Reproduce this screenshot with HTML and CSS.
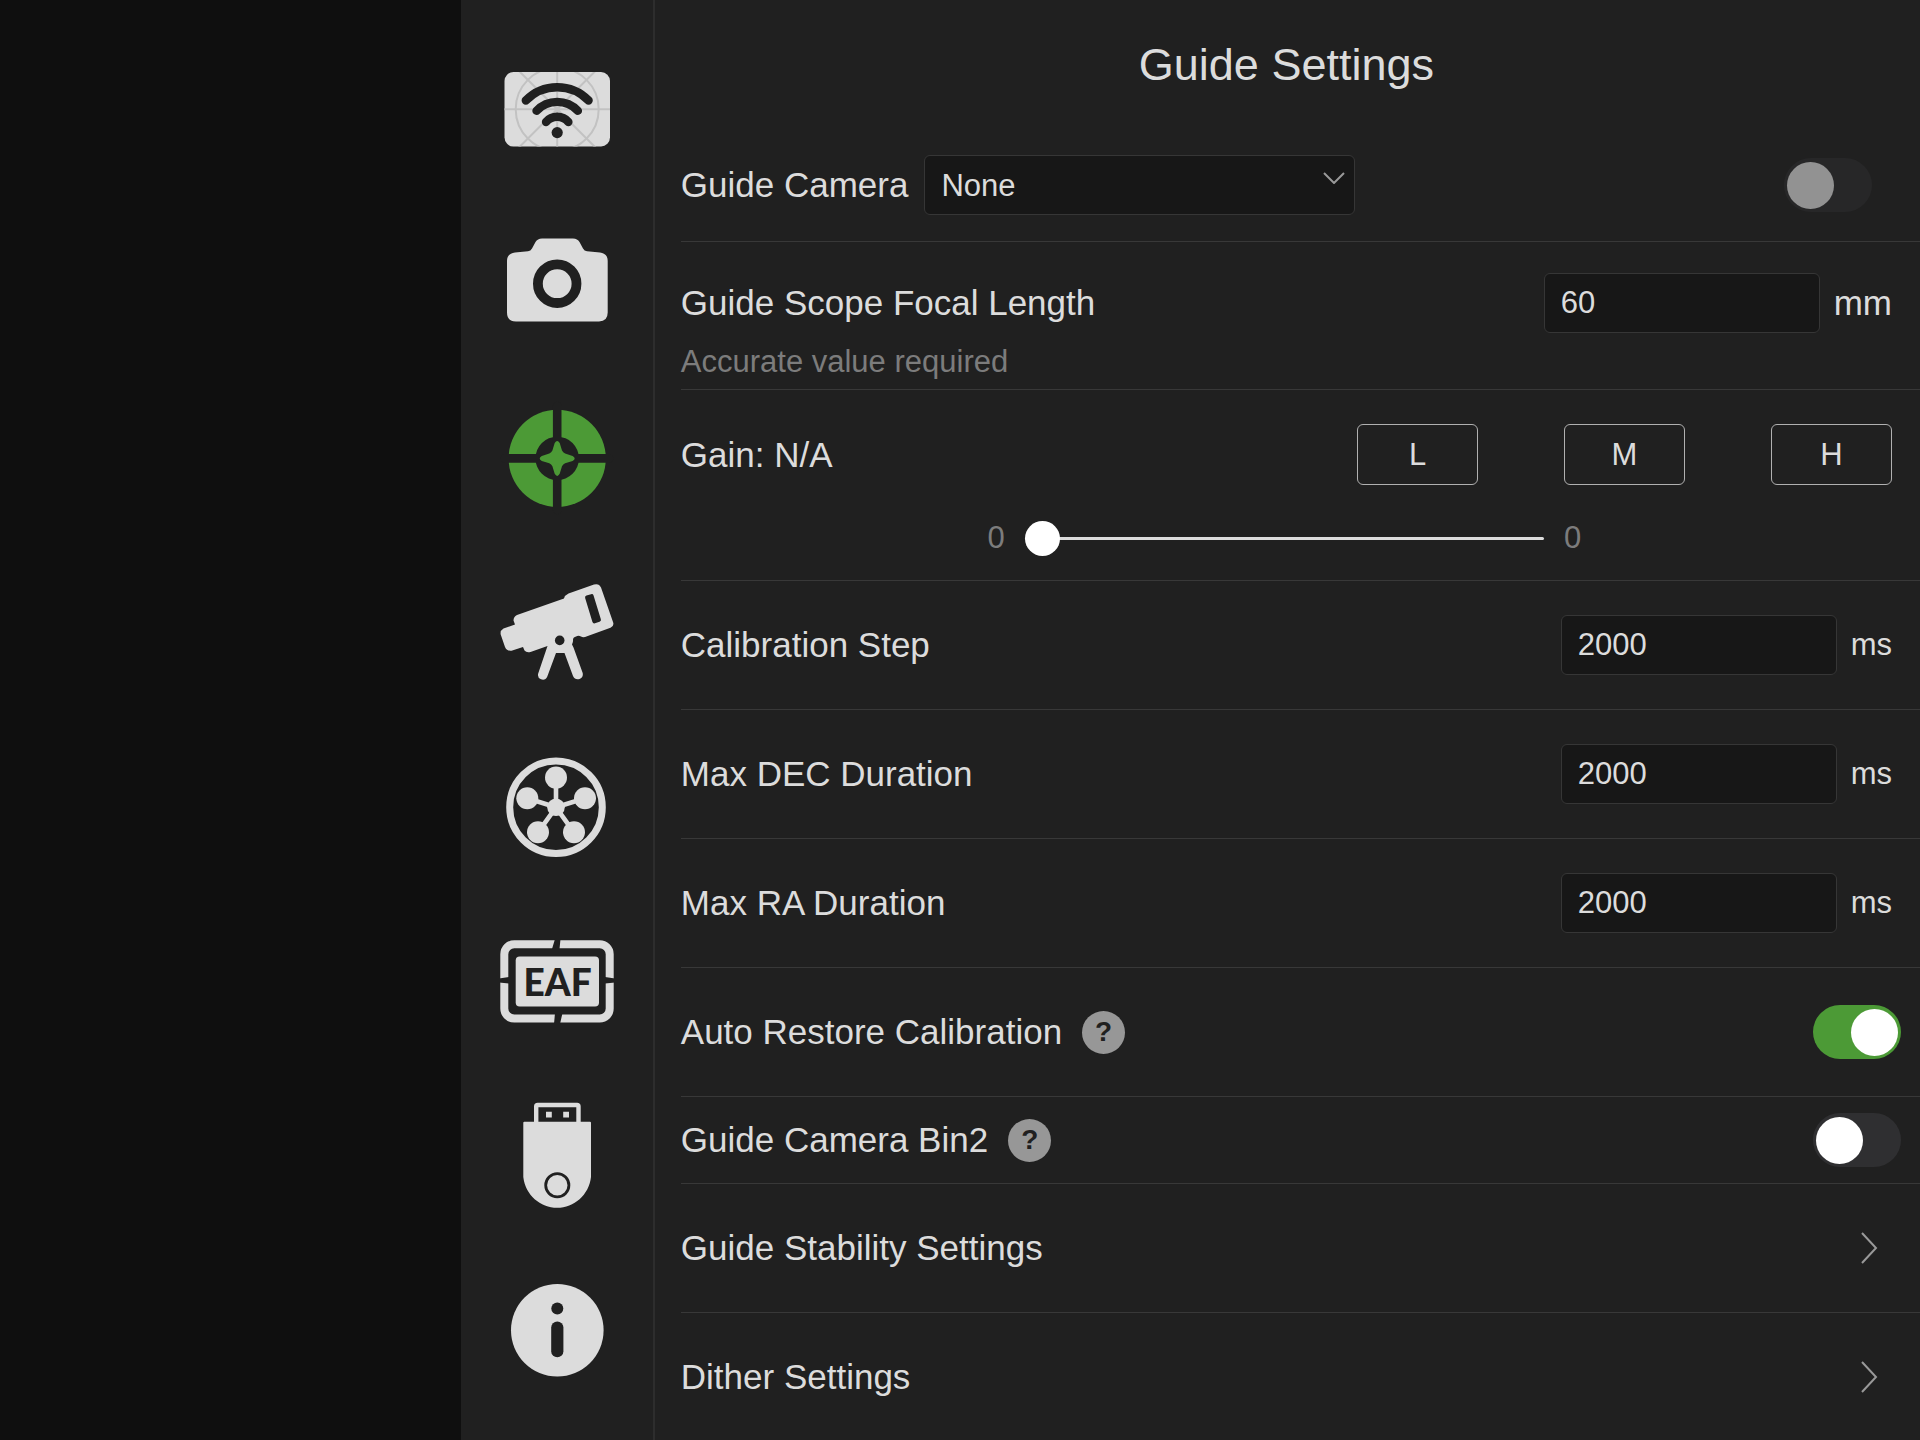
FILE: index.html
```html
<!DOCTYPE html>
<html lang="en">
<head>
<meta charset="utf-8">
<meta name="viewport" content="width=device-width, initial-scale=1.0">
<title>Guide Settings</title>
<link rel="stylesheet" href="styles.css">
</head>
<body>

<div class="backdrop"></div>

<nav class="sidebar">
  <button class="tab" aria-label="Wi-Fi">
    <svg class="icon" viewBox="0 0 120 120">
      <clipPath id="card"><rect x="7.5" y="23" width="105.5" height="74.5" rx="9"/></clipPath>
      <g clip-path="url(#card)">
        <rect class="fill" x="7" y="22" width="107" height="77"/>
        <g class="grid">
          <circle cx="60.2" cy="60.2" r="41.5"/>
          <path d="M7 60.2h107M60.2 22v77M20 20l80.4 80.4M100.4 20L20 100.4"/>
        </g>
      </g>
      <g class="cut-line" stroke-width="8.4">
        <path d="M28.8 51.5A43.7 43.7 0 0 1 91.6 51.5"/>
        <path d="M39.5 61.8A28.5 28.5 0 0 1 80.9 61.8"/>
        <path d="M49 73A14.7 14.7 0 0 1 71.4 73"/>
      </g>
      <circle class="cut" cx="60.2" cy="83.6" r="5.6"/>
    </svg>
  </button>
  <button class="tab" aria-label="Camera">
    <svg class="icon" viewBox="0 0 120 120">
      <path class="fill" d="M18 28.5L31 27.2Q33.7 27 35 24.5L38.5 18Q40.5 14.4 45 14.4H76Q80.5 14.4 82.500 18L86 24.5Q87.3 27 90 27.2L103 28.5Q110.7 29.5 110.7 37V88.5Q110.7 97.4 102 97.4H19Q10 97.4 10 88.5V37Q10 29.5 18 28.5Z"/>
      <circle class="cut-line" cx="60.2" cy="59.7" r="19.3" stroke-width="9.8"/>
    </svg>
  </button>
  <button class="tab active" aria-label="Guide">
    <svg class="icon" viewBox="0 0 120 120">
      <circle class="fill" cx="60.2" cy="60.4" r="48.6"/>
      <circle class="cut" cx="60.2" cy="60.4" r="21.7"/>
      <path class="cut-line" d="M8 60.4H112M60.2 8V112" stroke-width="8.6"/>
      <path class="fill" d="M57.7 45Q60.2 40.8 62.7 45L65 52.5Q66 54.6 68.1 55.6L75.6 57.9Q79.8 60.4 75.6 62.9L68.1 65.2Q66 66.2 65 68.3L62.7 75.8Q60.2 80 57.7 75.8L55.4 68.3Q54.4 66.2 52.3 65.2L44.8 62.9Q40.6 60.4 44.8 57.9L52.3 55.6Q54.4 54.6 55.4 52.5Z"/>
    </svg>
  </button>
  <button class="tab" aria-label="Telescope">
    <svg class="icon" viewBox="0 0 120 120">
      <path class="fill" d="M20 43L67 26.5Q68 23 71.5 21.5L97 12.5Q102 11 104 15.5L116 50Q117.5 54 113.5 55.8L88 65Q85.5 65.5 84 64.5Q81.5 62.8 79 64.5Q76.3 65 76 67Q76.4 70 75 72.5L76.5 75.5L85.7 101Q86.500 105.500 82.500 107Q78 108.200 76 104L67.500 81H59L50.300 104.500Q48.300 108.800 44 107.300Q40 105.500 41.200 101.500L50.500 74L33.500 80Q29.500 81 27.500 78.500L26 75L14.500 78.700Q10 79.500 8 75L3.700 62.500Q3 58.500 6.500 56.500L18 52.500L16.500 48.500Q16.500 44.500 20 43Z"/>
      <circle class="cut" cx="62.7" cy="68.4" r="4.8"/>
      <rect class="cut" x="91.6" y="22.2" width="8.8" height="29" rx="2" transform="rotate(-17 96 36.7)"/>
    </svg>
  </button>
  <button class="tab" aria-label="Filter wheel">
    <svg class="icon" viewBox="0 0 120 120">
      <g class="line">
        <circle cx="59" cy="60.3" r="46.3" stroke-width="7"/>
        <path d="M59 60.3V30.6M59 60.3L30.3 51.3M59 60.3L88 51.3M59 60.3L41 85.3M59 60.3L77 85.3" stroke-width="4.6"/>
      </g>
      <g class="fill">
        <circle cx="59" cy="60.3" r="8.8"/>
        <circle cx="59" cy="30.6" r="11"/>
        <circle cx="30.3" cy="51.3" r="11"/>
        <circle cx="88" cy="51.3" r="11"/>
        <circle cx="41" cy="85.3" r="11"/>
        <circle cx="77" cy="85.3" r="11"/>
      </g>
    </svg>
  </button>
  <button class="tab" aria-label="EAF focuser">
    <svg class="icon" viewBox="0 0 120 120">
      <rect class="line" x="7.3" y="23.2" width="105.4" height="74.4" rx="10" stroke-width="8"/>
      <path class="cut" d="M58 18H63.500L62.500 28H55ZM58 92H65.500L63 103H57ZM2 57.500L12 56V62.500L2 61.500ZM108 56L118 57.500V61.500L108 62.500Z"/>
      <rect class="fill" x="18.7" y="35.6" width="83.3" height="50" rx="4"/>
      <text class="eaf" x="60.5" y="74.5">EAF</text>
    </svg>
  </button>
  <button class="tab" aria-label="Storage">
    <svg class="icon" viewBox="0 0 120 120">
      <path class="line" d="M39.2 30V11.5Q39.2 10 40.7 10H80Q81.5 10 81.5 11.5V30" stroke-width="4.4"/>
      <path class="fill" d="M49 16.7h5.8v5.8H49ZM66.2 16.7H72v5.8h-5.8ZM27.3 26.8H93Q94 26.8 94 27.8V82C92 100 77 112.8 60.2 112.8S28.3 100 26.3 82V27.8Q26.3 26.8 27.3 26.8Z"/>
      <circle class="cut-line" cx="60.3" cy="90.2" r="11.6" stroke-width="2.8"/>
    </svg>
  </button>
  <button class="tab" aria-label="About">
    <svg class="icon" viewBox="0 0 120 120">
      <circle class="fill" cx="60.3" cy="60.2" r="46.3"/>
      <circle class="cut" cx="60.3" cy="38.5" r="6"/>
      <rect class="cut" x="54.2" y="51.5" width="12.2" height="35.8" rx="6.1"/>
    </svg>
  </button>
</nav>

<main class="settings">
  <h1 class="title">Guide Settings</h1>

  <div class="row row-camera">
    <label for="camera">Guide Camera</label>
    <div class="dropdown">
      <select id="camera" class="field"><option>None</option></select>
      <svg class="caret" viewBox="0 0 22 12"><path d="M1 1l10 10L21 1"/></svg>
    </div>
    <input type="checkbox" class="switch push" aria-label="Connect guide camera" disabled>
  </div>

  <div class="row row-focal">
    <div class="line-top">
      <label for="focal">Guide Scope Focal Length</label>
      <input id="focal" class="field number push" type="text" inputmode="numeric" value="60">
      <span class="unit unit-large">mm</span>
    </div>
    <div class="hint">Accurate value required</div>
  </div>

  <div class="row row-gain">
    <div class="line-top">
      <label for="gain">Gain: N/A</label>
      <div class="presets push">
        <button class="preset">L</button>
        <button class="preset">M</button>
        <button class="preset">H</button>
      </div>
    </div>
    <div class="slider">
      <span>0</span>
      <input id="gain" type="range" min="0" max="100" value="0">
      <span>0</span>
    </div>
  </div>

  <div class="row">
    <label for="step">Calibration Step</label>
    <input id="step" class="field number push" type="text" inputmode="numeric" value="2000">
    <span class="unit">ms</span>
  </div>

  <div class="row">
    <label for="dec">Max DEC Duration</label>
    <input id="dec" class="field number push" type="text" inputmode="numeric" value="2000">
    <span class="unit">ms</span>
  </div>

  <div class="row">
    <label for="ra">Max RA Duration</label>
    <input id="ra" class="field number push" type="text" inputmode="numeric" value="2000">
    <span class="unit">ms</span>
  </div>

  <div class="row row-switch">
    <label for="restore">Auto Restore Calibration</label>
    <button class="help" aria-label="Help">?</button>
    <input id="restore" type="checkbox" class="switch push" checked>
  </div>

  <div class="row row-switch row-short">
    <label for="bin2">Guide Camera Bin2</label>
    <button class="help" aria-label="Help">?</button>
    <input id="bin2" type="checkbox" class="switch push">
  </div>

  <a class="row row-link" href="#stability">
    Guide Stability Settings
    <svg class="arrow push" viewBox="0 0 18 32"><path d="M2 1l14 15L2 31"/></svg>
  </a>

  <a class="row row-link" href="#dither">
    Dither Settings
    <svg class="arrow push" viewBox="0 0 18 32"><path d="M2 1l14 15L2 31"/></svg>
  </a>
</main>

</body>
</html>
```
FILE: styles.css
```css
* {
  box-sizing: border-box;
}
body {
  --bg: #202020;
  --fg: #dcdcdc;
  --line: #383838;
  --green: #4c9a36;
  margin: 0;
  height: 100vh;
  overflow: hidden;
  display: flex;
  background: var(--bg);
  color: var(--fg);
  font-family: "Liberation Sans", Arial, sans-serif;
  font-size: 35px;
}
button, input, select {
  margin: 0;
  color: inherit;
  font-family: inherit;
  font-size: 31px;
}
button {
  padding: 0;
  border: 0;
  background: none;
}
.backdrop {
  flex: 0 0 24%;
  background: #0f0f0f;
}

/* sidebar */
.sidebar {
  flex: 0 0 194px;
  display: flex;
  flex-direction: column;
  padding: 22px 0 23px;
  border-right: 2px solid #2d2d2d;
}
.tab {
  flex: 1;
  min-height: 0;
  display: flex;
  align-items: center;
  justify-content: center;
}
.active {
  color: var(--green);
}
.icon {
  width: 120px;
  height: 120px;
}
.fill {
  fill: currentColor;
}
.line {
  fill: none;
  stroke: currentColor;
}
.cut {
  fill: var(--bg);
}
.cut-line {
  fill: none;
  stroke: var(--bg);
  stroke-linecap: round;
}
.grid {
  fill: none;
  stroke: #c2c2c2;
  stroke-width: 2;
}
.eaf {
  fill: var(--bg);
  font-family: Lato, sans-serif;
  font-size: 37px;
  font-weight: 900;
  text-anchor: middle;
}

/* settings list */
.settings {
  flex: 1;
  min-width: 0;
  padding-left: 26px;
}
.title {
  margin: 0 28px 0 0;
  font-size: 45px;
  font-weight: normal;
  line-height: 129px;
  text-align: center;
}
.row {
  display: flex;
  align-items: center;
  height: 129px;
  padding-right: 28px;
  border-bottom: 1px solid var(--line);
  color: inherit;
  text-decoration: none;
  white-space: nowrap;
}
.push {
  margin-left: auto;
}
.line-top {
  display: flex;
  align-items: center;
}
.row-camera {
  height: 113px;
  padding-right: 48px;
}
.row-focal {
  display: block;
  height: 148px;
  padding-top: 31px;
}
.row-gain {
  display: block;
  height: 191px;
  padding-top: 34px;
}
.row-switch {
  padding-right: 19px;
}
.row-short {
  height: 87px;
}
.row-link {
  padding-right: 42px;
}
.hint {
  color: #7c7c7c;
  font-size: 31px;
  line-height: 58px;
}

/* fields */
.field {
  appearance: none;
  height: 60px;
  padding: 0 16px;
  border: 1px solid #363636;
  border-radius: 6px;
  background: #171717;
}
.number {
  width: 276px;
}
.unit {
  margin-left: 14px;
  font-size: 31px;
}
.unit-large {
  font-size: 35px;
}
.dropdown {
  position: relative;
  flex: 0 1 431px;
  margin-left: 16px;
}
.dropdown .field {
  width: 100%;
}
.caret {
  position: absolute;
  top: 17px;
  right: 10px;
  width: 22px;
  height: 12px;
  pointer-events: none;
}
.caret path, .arrow path {
  fill: none;
  stroke: #999;
  stroke-width: 2;
}
.arrow {
  width: 18px;
  height: 32px;
}

/* gain */
.presets {
  display: flex;
  gap: 86px;
}
.preset {
  width: 121px;
  height: 61px;
  border: 1px solid #b0b0b0;
  border-radius: 6px;
}
.slider {
  display: flex;
  align-items: center;
  justify-content: center;
  gap: 20px;
  height: 106px;
  padding-right: 4px;
  color: #7c7c7c;
  font-size: 31px;
}
.slider input {
  appearance: none;
  width: 43%;
  height: 35px;
  background: none;
}
.slider input::-webkit-slider-runnable-track {
  height: 3px;
  border-radius: 2px;
  background: #dcdcdc;
}
.slider input::-webkit-slider-thumb {
  appearance: none;
  width: 35px;
  height: 35px;
  margin-top: -16px;
  border-radius: 50%;
  background: #fff;
}

/* switches */
.switch {
  appearance: none;
  display: flex;
  align-items: center;
  width: 88px;
  height: 54px;
  padding: 0 3px;
  border-radius: 27px;
  background: #2f2f31;
}
.switch::before {
  content: "";
  width: 47px;
  height: 47px;
  border-radius: 50%;
  background: #fff;
}
.switch:checked {
  justify-content: flex-end;
  background: var(--green);
}
.switch:disabled {
  background: #272728;
}
.switch:disabled::before {
  background: #929292;
}
.help {
  width: 43px;
  height: 43px;
  margin-left: 20px;
  border-radius: 50%;
  background: #979797;
  color: var(--bg);
  font-size: 28px;
  font-weight: bold;
}
```
